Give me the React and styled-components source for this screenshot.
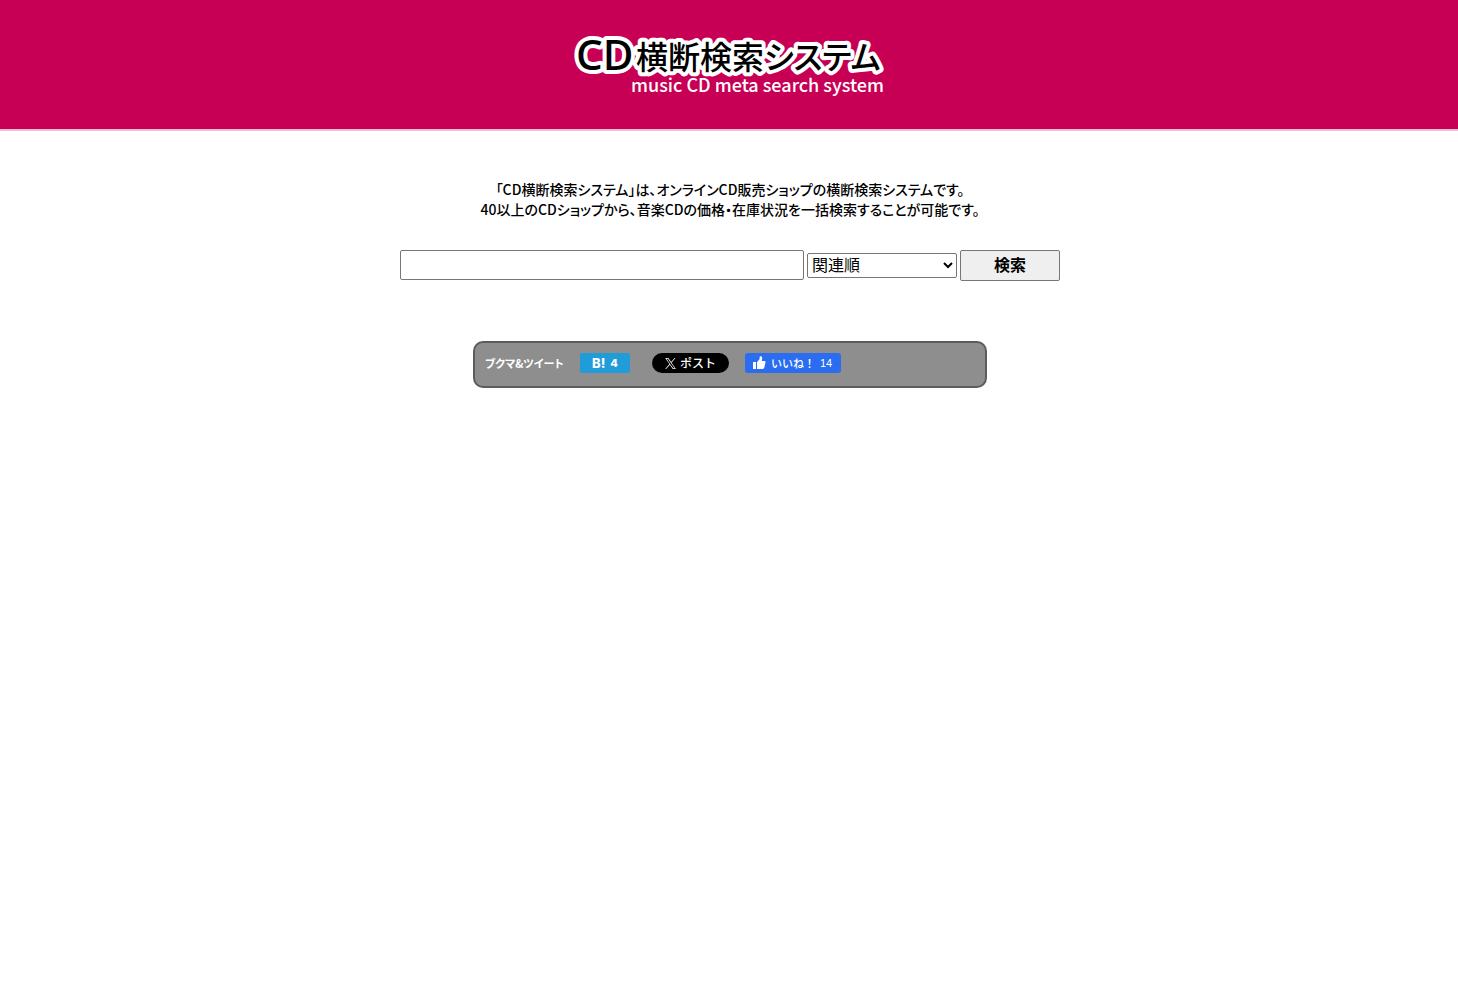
import React, { useState } from 'react';
import styled, { createGlobalStyle } from 'styled-components';

const App = () => {
  const [keyword, setKeyword] = useState('');
  const [order, setOrder] = useState('relevance');

  const handleSubmit = (e) => {
    e.preventDefault();
    console.log('Search:', keyword, order);
  };

  return (
    <>
      <GlobalStyle />
      <Header>
        <Logo href="/">
          <LogoArt width="310" height="68" viewBox="0 0 310 68">
            <LogoLatin x="2" y="39">CD</LogoLatin>
            <LogoTitle x="62" y="38">横断検索システム</LogoTitle>
            <LogoSubtitle x="310" y="61">music CD meta search system</LogoSubtitle>
          </LogoArt>
        </Logo>
      </Header>
      <Main>
        <Description>
          「CD横断検索システム」は、オンラインCD販売ショップの横断検索システムです。
          <br />
          40以上のCDショップから、音楽CDの価格・在庫状況を一括検索することが可能です。
        </Description>
        <SearchForm onSubmit={handleSubmit}>
          <SearchInput
            type="text"
            aria-label="キーワード"
            value={keyword}
            onChange={(e) => setKeyword(e.target.value)}
          />
          <OrderSelect
            aria-label="並び順"
            value={order}
            onChange={(e) => setOrder(e.target.value)}
          >
            <option value="relevance">関連順</option>
          </OrderSelect>
          <SearchButton type="submit">検索</SearchButton>
        </SearchForm>
        <ShareBar>
          <ShareLabel>ブクマ&amp;ツイート</ShareLabel>
          <HatenaLink href="#hatena">
            <HatenaMark>B!</HatenaMark>4
          </HatenaLink>
          <PostLink href="#post">
            <svg width="11" height="11" viewBox="0 0 24 24" fill="#fff" aria-hidden="true">
              <path d="M14.3 10.2 22.9 0h-2l-7.5 8.8L7.4 0H.5l9.1 13.3L.5 24h2l8-9.3 6.4 9.3h6.9zm-2.9 3.3-.9-1.3L3.3 1.6h3.1l6 8.6.9 1.3 7.8 11.1H18z" />
            </svg>
            ポスト
          </PostLink>
          <LikeButton type="button">
            <svg width="14" height="14" viewBox="0 0 14 14" fill="#fff" aria-hidden="true">
              <path d="M1 6h3v7H1zM5 6.2 7.6 3V1.2C7.6.4 8.2 0 8.9.2c1.1.3 1.5 1.5 1.2 2.7L9.7 5h2.6c.9 0 1.4.6 1.2 1.4l-1.2 5.2c-.2.8-.7 1.4-1.6 1.4H5z" />
            </svg>
            いいね！
            <LikeCount>14</LikeCount>
          </LikeButton>
        </ShareBar>
      </Main>
    </>
  );
};

const GlobalStyle = createGlobalStyle`
  * {
    box-sizing: border-box;
  }

  body {
    margin: 0;
    background: #fff;
    color: #000;
    font-family: 'Noto Sans CJK JP', sans-serif;
  }
`;

const Header = styled.header`
  display: flex;
  justify-content: center;
  height: 131px;
  padding-top: 31px;
  background: #c70055;
  border-bottom: 2px solid #f0bfd4;
`;

const Logo = styled.a`
  display: block;
  text-decoration: none;
`;

const LogoArt = styled.svg`
  display: block;
  overflow: visible;
`;

const LogoTitle = styled.text`
  font-family: 'Noto Sans CJK JP', sans-serif;
  font-size: 32px;
  font-weight: 500;
  font-feature-settings: 'palt';
  fill: #000;
  stroke: #fff;
  stroke-width: 8px;
  stroke-linejoin: round;
  paint-order: stroke fill;
`;

const LogoLatin = styled(LogoTitle)`
  font-family: 'Noto Sans', sans-serif;
  font-size: 42px;
`;

const LogoSubtitle = styled.text`
  font-family: 'Noto Sans CJK JP', sans-serif;
  font-size: 18px;
  font-weight: 500;
  text-anchor: end;
  fill: #fff;
`;

const Main = styled.main`
  display: flex;
  flex-direction: column;
  align-items: center;
  padding-left: 2px;
`;

const Description = styled.p`
  margin: 48px 0 31px;
  font-size: 14px;
  line-height: 20px;
  font-weight: 500;
  font-feature-settings: 'palt';
  text-align: center;
`;

const SearchForm = styled.form`
  display: flex;
  align-items: center;
  gap: 3px;
  margin-bottom: 60px;
`;

const SearchInput = styled.input`
  align-self: flex-start;
  width: 404px;
  height: 30px;
  padding: 1px 4px;
  font-size: 16px;
  background: #fff;
  border: 1px solid #767676;
  border-radius: 2px;
`;

const OrderSelect = styled.select`
  width: 150px;
  height: 25px;
  font-family: 'Liberation Sans', 'Noto Sans CJK JP', sans-serif;
  font-size: 16px;
  color: #000;
  background: #fff;
  border: 1px solid #767676;
  border-radius: 2px;
`;

const SearchButton = styled.button`
  width: 100px;
  height: 31px;
  padding: 0;
  font-family: 'Liberation Sans', 'Noto Sans CJK JP', sans-serif;
  font-size: 16px;
  font-weight: bold;
  line-height: 24px;
  color: #000;
  background: #efefef;
  border: 1px solid #767676;
  border-radius: 2px;
`;

const ShareBar = styled.div`
  display: flex;
  align-items: flex-start;
  width: 514px;
  max-width: 100%;
  height: 47px;
  padding: 10px;
  background: #8e8e8e;
  border: 2px solid #5c5c5c;
  border-radius: 10px;
  color: #fff;
`;

const ShareLabel = styled.span`
  width: 95px;
  font-size: 11px;
  line-height: 20px;
  font-weight: bold;
  font-feature-settings: 'palt';
`;

const HatenaLink = styled.a`
  display: flex;
  align-items: center;
  justify-content: center;
  gap: 5px;
  width: 50px;
  height: 20px;
  margin-right: 22px;
  font-family: Inter, sans-serif;
  font-size: 11px;
  font-weight: 800;
  color: #fff;
  text-decoration: none;
  background: #209cd8;
  border-radius: 2px;
`;

const HatenaMark = styled.span`
  font-size: 13px;
`;

const PostLink = styled.a`
  display: flex;
  align-items: center;
  justify-content: center;
  gap: 4px;
  width: 77px;
  height: 20px;
  margin-right: 16px;
  font-size: 12px;
  line-height: 20px;
  font-weight: 500;
  color: #fff;
  text-decoration: none;
  background: #000;
  border-radius: 10px;
`;

const LikeButton = styled.button`
  display: flex;
  align-items: center;
  gap: 5px;
  width: 96px;
  height: 20px;
  padding: 0 7px;
  font-family: inherit;
  font-size: 11px;
  line-height: 20px;
  font-weight: 500;
  white-space: nowrap;
  color: #fff;
  background: #2a6df0;
  border: none;
  border-radius: 3px;
`;

const LikeCount = styled.span`
  font-family: 'Liberation Sans', sans-serif;
  font-weight: normal;
`;

export default App;
